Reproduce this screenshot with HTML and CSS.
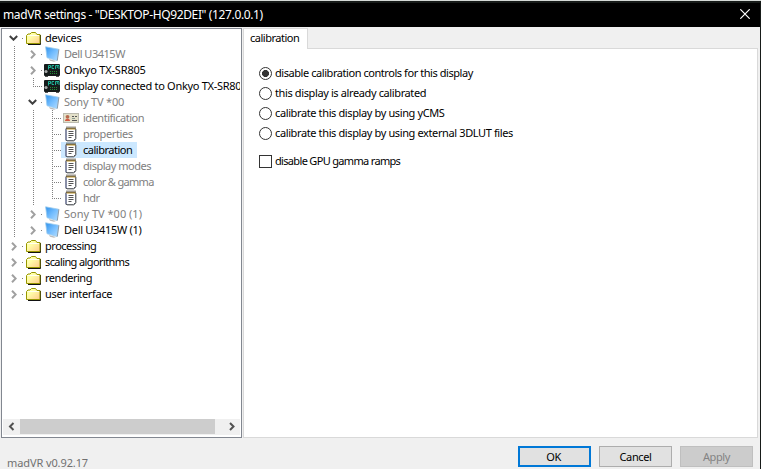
FILE: index.html
```
<!DOCTYPE html>
<html lang="en">
<head>
<meta charset="utf-8">
<title>madVR settings</title>
<link rel="stylesheet" href="styles.css">
</head>
<body>
<svg class="defs" width="0" height="0" aria-hidden="true">
  <defs>
    <linearGradient id="screen" x1="0" y1="0" x2="1" y2="1"><stop offset="0" stop-color="#2f91ea"/><stop offset=".5" stop-color="#73bdff"/><stop offset="1" stop-color="#b4ddff"/></linearGradient>
    <linearGradient id="manila" x1="0" y1="0" x2="1" y2="1"><stop offset=".35" stop-color="#ffffa8"/><stop offset="1" stop-color="#ffc98c"/></linearGradient>
    <symbol id="open" viewBox="0 0 9 6"><path d="M.8 1l3.700 3.700L8.200 1" fill="none" stroke="#404040" stroke-width="2"/></symbol>
    <symbol id="closed" viewBox="0 0 6 9"><path d="M1 .8l3.700 3.700L1 8.200" fill="none" stroke="#a0a0a0" stroke-width="2"/></symbol>
    <symbol id="folder" viewBox="0 0 16 16"><path d="M2 14.500h12.500V5" fill="none" stroke="#111"/><path d="M.5 13.500V5.500l1.500-1.500h2l1.500-1.500h4L11 4.500h3v9z" fill="url(#manila)" stroke="#969600"/><path d="M1.500 5.500h11.500" stroke="#fffff0"/></symbol>
    <symbol id="monitor" viewBox="0 0 16 16"><path d="M4 13l7 2-2 .8-4-1z" fill="#bbb"/><path d="M.6.800l13 2.400-1.600 11.300L2 11.700z" fill="url(#screen)" stroke="#9ccbed" stroke-width=".8"/><path d="M13.900 3.300l-1.600 11.300" stroke="#8794a2" stroke-width=".9"/></symbol>
    <symbol id="amp" viewBox="1 0 16 14"><rect x="1" y="1" width="16" height="12" rx="1" fill="#161c1c"/><path d="M5.500 6.500v-4h2v2h-2M11 2.500H9v3h2M12.500 6V2.500h3.500V6M14.300 2.500V5" fill="none" stroke="#20bfa3" stroke-width=".9"/><circle cx="3" cy="8.500" r="1.600" fill="#a8aaaa"/><path d="M7 8.500h8M7 10.500h8" stroke="#248a35" stroke-dasharray="1 1"/><path d="M2 13.500h3m8 0h3" stroke="#555"/></symbol>
    <symbol id="card" viewBox="0 0 16 12"><rect x=".5" y="1.500" width="15" height="9" fill="#e3e0c9" stroke="#bbbaae"/><path d="M2 9c0-3 5-3 5 0z" fill="#d4573f"/><circle cx="4.500" cy="4.800" r="1.900" fill="#b76a4e"/><path d="M9 4.500h2M12 4.500h2M9 8.500h5" stroke="#555"/><path d="M9 6.500h3" stroke="#8a9a90"/></symbol>
    <symbol id="pad" viewBox="0 0 13 16"><path d="M1.500 2.500h9.500v10l-2 2H1.500z" fill="#fff" stroke="#555a60"/><path d="M1.500 3v11" stroke="#6870a0"/><path d="M11.500 3v10l-2 2h-7" fill="none" stroke="#85878a"/><path d="M2 1.500h9" stroke="#3f3520" stroke-width="2" stroke-dasharray="1 1"/><path d="M2 3h9" stroke="#c29629"/><path d="M4 5.500h5M4 7.500h5M4 9.500h5M4 11.500h3" stroke="#565656"/></symbol>
  </defs>
</svg>
<div class="backdrop"></div>
<main class="window">
  <header class="titlebar"><span class="title">madVR settings - "DESKTOP-HQ92DEI" (127.0.0.1)</span>
    <svg class="close" viewBox="0 0 10 10"><path d="M.3.3l9.400 9.400M9.700.3L.3 9.700" stroke="#fff" stroke-width="1.200"/></svg>
  </header>
  <div class="content">
    <nav class="tree">
      <div class="rows">
        <div class="row"><i class="cell stub"><svg class="down"><use href="#open"/></svg></i><svg class="icon"><use href="#folder"/></svg><span class="label t2">devices</span></div>
        <div class="row off"><i class="cell line"></i><i class="cell stub"><svg class="right"><use href="#closed"/></svg></i><svg class="icon"><use href="#monitor"/></svg><span class="label t5">Dell U3415W</span></div>
        <div class="row"><i class="cell line"></i><i class="cell stub"><svg class="right"><use href="#closed"/></svg></i><svg class="icon amp"><use href="#amp"/></svg><span class="label t2">Onkyo TX-SR805</span></div>
        <div class="row"><i class="cell line"></i><i class="cell branch last"></i><svg class="icon amp"><use href="#amp"/></svg><span class="label t3">display connected to Onkyo TX-SR80</span></div>
        <div class="row off"><i class="cell line"></i><i class="cell stub"><svg class="down"><use href="#open"/></svg></i><svg class="icon"><use href="#monitor"/></svg><span class="label t2">Sony TV *00</span></div>
        <div class="row off"><i class="cell line"></i><i class="cell line"></i><i class="cell branch"></i><svg class="icon leaf"><use href="#card"/></svg><span class="label t5">identification</span></div>
        <div class="row off"><i class="cell line"></i><i class="cell line"></i><i class="cell branch"></i><svg class="icon leaf"><use href="#pad"/></svg><span class="label t4">properties</span></div>
        <div class="row"><i class="cell line"></i><i class="cell line"></i><i class="cell branch"></i><span class="pick"><svg class="icon leaf"><use href="#pad"/></svg><span class="label t5">calibration</span></span></div>
        <div class="row off"><i class="cell line"></i><i class="cell line"></i><i class="cell branch"></i><svg class="icon leaf"><use href="#pad"/></svg><span class="label t5">display modes</span></div>
        <div class="row off"><i class="cell line"></i><i class="cell line"></i><i class="cell branch"></i><svg class="icon leaf"><use href="#pad"/></svg><span class="label t7">color &amp; gamma</span></div>
        <div class="row off"><i class="cell line"></i><i class="cell line"></i><i class="cell branch last"></i><svg class="icon leaf"><use href="#pad"/></svg><span class="label t5">hdr</span></div>
        <div class="row off"><i class="cell line"></i><i class="cell stub"><svg class="right"><use href="#closed"/></svg></i><svg class="icon"><use href="#monitor"/></svg><span class="label">Sony TV *00 (1)</span></div>
        <div class="row"><i class="cell line"></i><i class="cell stub"><svg class="right"><use href="#closed"/></svg></i><svg class="icon"><use href="#monitor"/></svg><span class="label t3">Dell U3415W (1)</span></div>
        <div class="row"><i class="cell stub"><svg class="right"><use href="#closed"/></svg></i><svg class="icon"><use href="#folder"/></svg><span class="label t5">processing</span></div>
        <div class="row"><i class="cell stub"><svg class="right"><use href="#closed"/></svg></i><svg class="icon"><use href="#folder"/></svg><span class="label t6">scaling algorithms</span></div>
        <div class="row"><i class="cell stub"><svg class="right"><use href="#closed"/></svg></i><svg class="icon"><use href="#folder"/></svg><span class="label t5">rendering</span></div>
        <div class="row"><i class="cell stub"><svg class="right"><use href="#closed"/></svg></i><svg class="icon"><use href="#folder"/></svg><span class="label t3">user interface</span></div>
      </div>
      <div class="scrollbar">
        <svg class="arrow" viewBox="0 0 17 15"><path d="M10.500 4L7 7.500l3.500 3.500" fill="none" stroke="#505050" stroke-width="2"/></svg>
        <div class="thumb"></div>
        <svg class="arrow" viewBox="0 0 17 15"><path d="M7 4l3.500 3.500L7 11" fill="none" stroke="#505050" stroke-width="2"/></svg>
      </div>
    </nav>
    <section class="pane">
      <div class="tabs"><div class="tab"><span class="t5">calibration</span></div><div class="tabfill"></div></div>
      <div class="sheet">
        <div class="option"><i class="radio on"></i><span class="t45">disable calibration controls for this display</span></div>
        <div class="option"><i class="radio"></i><span class="t4">this display is already calibrated</span></div>
        <div class="option"><i class="radio"></i><span class="t4">calibrate this display by using yCMS</span></div>
        <div class="option"><i class="radio"></i><span class="t4">calibrate this display by using external 3DLUT files</span></div>
        <div class="option check"><i class="box"></i><span class="t7">disable GPU gamma ramps</span></div>
      </div>
    </section>
  </div>
  <footer class="footer">
    <span class="version">madVR v0.92.17</span>
    <div class="buttons"><div class="button primary t5">OK</div><div class="button t4">Cancel</div><div class="button disabled t4">Apply</div></div>
  </footer>
</main>
</body>
</html>
```
FILE: styles.css
```
* { box-sizing: border-box; }
body {
  margin: 0; width: 761px; height: 469px; overflow: hidden; background: #f0f0f0;
  font: 11px/16px "Noto Sans", "Open Sans", sans-serif; color: #000; white-space: nowrap;
}
svg { display: block; flex: none; }
.defs { position: absolute; }
.backdrop { height: 1px; background: #d5dad7; }
.window { height: 468px; border-top: 2px solid #171b19; border-right: 1px solid #171b19; display: flex; flex-direction: column; }
.titlebar { height: 24px; flex: none; background: #000; color: #fff; display: flex; align-items: center; justify-content: space-between; padding: 0 10px 0 3px; font-size: 12px; }
.title { letter-spacing: -.37px; }
.t2 { letter-spacing: -.18px; }
.t3 { letter-spacing: -.3px; }
.t4 { letter-spacing: -.38px; }
.t45 { letter-spacing: -.44px; }
.t5 { letter-spacing: -.48px; }
.t6 { letter-spacing: -.6px; }
.t7 { letter-spacing: -.67px; }
.close { width: 10px; height: 10px; margin-top: -2px; }
.content { display: flex; height: 411px; padding: 1px 1px 0; flex: none; }
.tree { width: 241px; height: 410px; border: 1px solid #828790; background: #fff; padding: 1px; display: flex; flex-direction: column; justify-content: space-between; }
.rows { padding-left: 2px; overflow: hidden; }
.row, .pick { display: flex; height: 16px; }
.off { color: #808080; }
.cell { width: 19px; height: 16px; flex: none; display: flex; align-items: center; justify-content: center; padding-right: 2px; background-repeat: no-repeat; }
.line { background-image: repeating-linear-gradient(#808080 0 1px, transparent 1px 2px); background-size: 1px 16px; background-position: 9px 0; }
.branch { background-image: repeating-linear-gradient(90deg, #808080 0 1px, transparent 1px 2px), repeating-linear-gradient(#808080 0 1px, transparent 1px 2px); background-size: 10px 1px, 1px 16px; background-position: 9px 8px, 9px 0; }
.branch.last { background-size: 10px 1px, 1px 8px; }
.stub { background-image: repeating-linear-gradient(90deg, #808080 0 1px, transparent 1px 2px); background-size: 3px 1px; background-position: 17px 8px; }
.down { width: 9px; height: 6px; }
.right { width: 6px; height: 9px; }
.icon { width: 16px; height: 16px; margin: 0 3px 0 2px; }
.amp { margin: 0 4px 0 1px; }
.leaf { margin: 0 4px 0 1px; }
.pick { background: #cce8ff; width: 76px; margin-left: -1px; padding-left: 1px; }
.scrollbar { height: 16px; margin-bottom: 1px; padding-bottom: 1px; background: #f0f0f0; display: flex; }
.arrow { width: 17px; height: 15px; }
.thumb { width: 195px; background: #cdcdcd; margin-right: 8px; }
.pane { flex: 1; padding: 0 1px 0 1px; display: flex; flex-direction: column; }
.tabs { display: flex; height: 21px; }
.tab { width: 65px; border: 1px solid #d9d9d9; border-bottom: 0; background: #fff; padding: 1px 0 0 6px; }
.tabfill { flex: 1; border-bottom: 1px solid #d9d9d9; }
.sheet { flex: 1; background: #fff; border: 1px solid #d9d9d9; border-top: 0; padding: 14px 15px; }
.option { display: flex; align-items: center; height: 20px; gap: 3px; }
.check { margin-top: 8px; }
.radio { width: 13px; height: 13px; border: 1px solid #333; border-radius: 50%; background: #fff; }
.on { background: radial-gradient(circle, #333 0 3.200px, #fff 3.800px); }
.box { width: 13px; height: 13px; border: 1px solid #333; }
.footer { flex: 1; display: flex; justify-content: space-between; padding: 8px 7px 0 7px; }
.version { color: #707070; padding-top: 9px; letter-spacing: -.1px; }
.buttons { display: flex; gap: 8px; }
.button { width: 73px; height: 21px; border: 1px solid #adadad; background: #e1e1e1; text-align: center; line-height: 20px; }
.primary { border: 2px solid #0078d7; line-height: 18px; padding-right: 2px; }
.disabled { background: #ccc; border-color: #bfbfbf; color: #838383; }
```
